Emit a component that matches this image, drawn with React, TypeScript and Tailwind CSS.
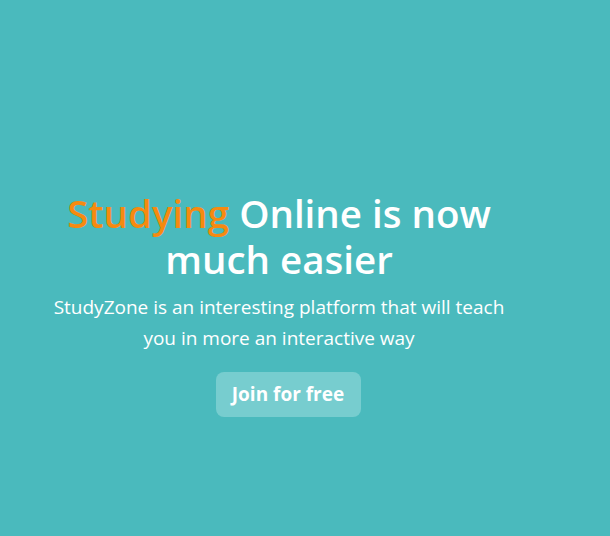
export default function App() {
  return (
    <div
      className="w-[610px] h-[536px] bg-[#4ABABD] flex flex-col items-start text-white"
      style={{ fontFamily: '"Open Sans", "Noto Sans", sans-serif' }}
    >
      <div className="w-[558px] mt-[190px] flex flex-col items-center text-center">
        <h1 className="text-[38.5px] leading-[46px] font-semibold w-[460px]">
          <span className="text-[#F68A10]">Studying</span> Online is now much easier
        </h1>
        <p className="mt-[10px] text-[19px] leading-[31px] w-[462px]">
          StudyZone is an interesting platform that will teach you in more an interactive way
        </p>
        <button className="mt-[18px] ml-[18px] w-[145px] h-[45px] rounded-lg bg-[#77CDCF] text-[19px] font-bold text-white">
          Join for free
        </button>
      </div>
    </div>
  );
}
